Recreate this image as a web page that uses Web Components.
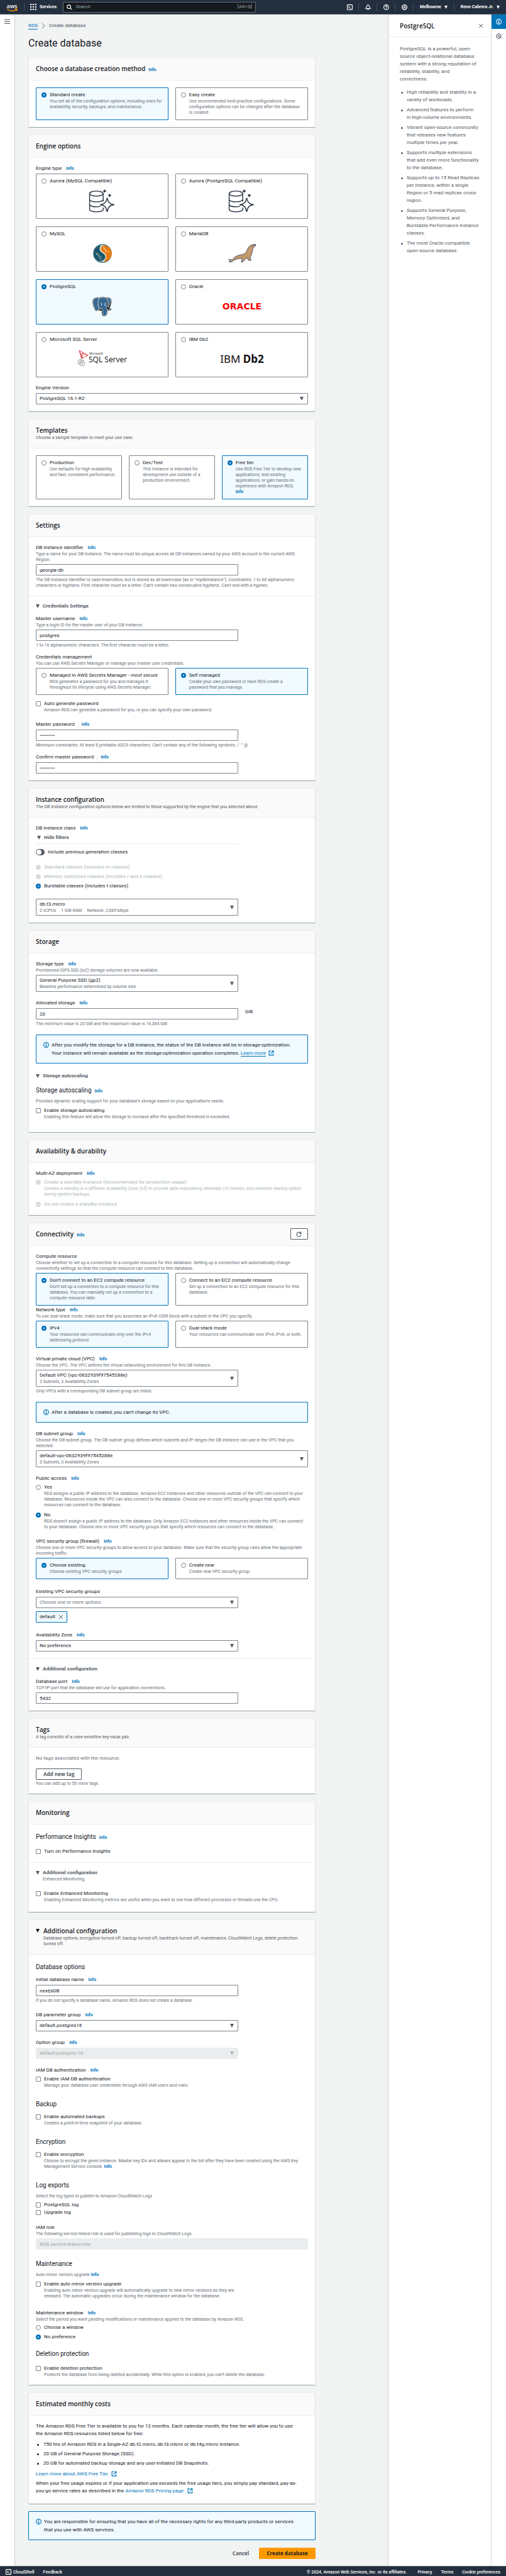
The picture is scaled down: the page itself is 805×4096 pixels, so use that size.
<!DOCTYPE html>
<html lang="en">
<head>
<meta charset="utf-8">
<meta name="viewport" content="width=device-width, initial-scale=1">
<title>Create database - RDS</title>
<style>
  html, body { margin: 0; }
  body {
    --ink: #16191f; --muted: #687078; --soft: #545b64; --link: #0073bb;
    --line: #eaeded; --edge: #7d858c; --off: #aab7b8; --nav: #232f3e;
    --heading: "Open Sans", "Noto Sans", sans-serif;
    font-family: Roboto, "Open Sans", sans-serif;
    font-size: 8px; line-height: 12px; color: var(--ink); background: #f2f3f3;
  }
</style>
</head>
<body>
<console-page>
  <console-topbar slot="top"></console-topbar>
  <crumb-trail></crumb-trail>
  <page-title>Create database</page-title>

  <page-column>
    <form-card heading="Choose a database creation method" info>
      <tile-group>
        <option-tile label="Standard create" name="method" checked>You set all of the configuration options, including ones for availability, security, backups, and maintenance.</option-tile>
        <option-tile label="Easy create" name="method">Use recommended best-practice configurations. Some configuration options can be changed after the database is created.</option-tile>
      </tile-group>
    </form-card>

    <form-card heading="Engine options">
      <v-stack gap="11">
        <form-field label="Engine type" info>
          <tile-group>
            <option-tile label="Aurora (MySQL Compatible)" name="engine"><engine-logo slot="logo" kind="aurora"></engine-logo></option-tile>
            <option-tile label="Aurora (PostgreSQL Compatible)" name="engine"><engine-logo slot="logo" kind="aurora"></engine-logo></option-tile>
            <option-tile label="MySQL" name="engine"><engine-logo slot="logo" kind="mysql"></engine-logo></option-tile>
            <option-tile label="MariaDB" name="engine"><engine-logo slot="logo" kind="mariadb"></engine-logo></option-tile>
            <option-tile label="PostgreSQL" name="engine" checked><engine-logo slot="logo" kind="postgres"></engine-logo></option-tile>
            <option-tile label="Oracle" name="engine"><engine-logo slot="logo" kind="oracle"></engine-logo></option-tile>
            <option-tile label="Microsoft SQL Server" name="engine"><engine-logo slot="logo" kind="sqlserver"></engine-logo></option-tile>
            <option-tile label="IBM Db2" name="engine"><engine-logo slot="logo" kind="db2"></engine-logo></option-tile>
          </tile-group>
        </form-field>
        <form-field label="Engine Version" control="select" value="PostgreSQL 16.1-R2" wide></form-field>
      </v-stack>
    </form-card>

    <form-card heading="Templates" note="Choose a sample template to meet your use case.">
      <tile-group columns="3">
        <option-tile label="Production" name="template">Use defaults for high availability and fast, consistent performance.</option-tile>
        <option-tile label="Dev/Test" name="template">This instance is intended for development use outside of a production environment.</option-tile>
        <option-tile label="Free tier" name="template" checked>Use RDS Free Tier to develop new applications, test existing applications, or gain hands-on experience with Amazon RDS. <info-link></info-link></option-tile>
      </tile-group>
    </form-card>

    <form-card heading="Settings">
      <form-field label="DB instance identifier" info control="text" value="georgia-db"
        note="Type a name for your DB instance. The name must be unique across all DB instances owned by your AWS account in the current AWS Region."
        hint="The DB instance identifier is case-insensitive, but is stored as all lowercase (as in &quot;mydbinstance&quot;). Constraints: 1 to 60 alphanumeric characters or hyphens. First character must be a letter. Can't contain two consecutive hyphens. Can't end with a hyphen."></form-field>
      <v-stack slot="extra" gap="8">
        <expand-head label="Credentials Settings"></expand-head>
        <form-field label="Master username" info control="text" value="postgres" note="Type a login ID for the master user of your DB instance." hint="1 to 16 alphanumeric characters. The first character must be a letter."></form-field>
        <form-field label="Credentials management" note="You can use AWS Secrets Manager or manage your master user credentials.">
          <tile-group>
            <option-tile label="Managed in AWS Secrets Manager - " emphasis="most secure" name="cred">RDS generates a password for you and manages it throughout its lifecycle using AWS Secrets Manager.</option-tile>
            <option-tile label="Self managed" name="cred" checked>Create your own password or have RDS create a password that you manage.</option-tile>
          </tile-group>
        </form-field>
        <v-stack gap="12">
          <choice-row label="Auto generate password">Amazon RDS can generate a password for you, or you can specify your own password.</choice-row>
          <v-stack gap="8">
            <form-field label="Master password" info="divided" control="password" value="postgres1" hint="Minimum constraints: At least 8 printable ASCII characters. Can't contain any of the following symbols: / ' &quot; @"></form-field>
            <form-field label="Confirm master password" info="divided" control="password" value="postgres1"></form-field>
          </v-stack>
        </v-stack>
      </v-stack>
    </form-card>

    <form-card heading="Instance configuration" note="The DB instance configuration options below are limited to those supported by the engine that you selected above.">
      <v-stack gap="12">
        <v-stack gap="4">
          <form-label label="DB instance class" info></form-label>
          <v-stack gap="7">
            <expand-head label="Hide filters" ruled></expand-head>
            <toggle-row label="Include previous generation classes"></toggle-row>
          </v-stack>
        </v-stack>
        <v-stack gap="3">
          <choice-row type="radio" name="class" label="Standard classes (includes m classes)" disabled></choice-row>
          <choice-row type="radio" name="class" label="Memory optimized classes (includes r and x classes)" disabled></choice-row>
          <choice-row type="radio" name="class" label="Burstable classes (includes t classes)" checked></choice-row>
        </v-stack>
        <form-field control="select" aria="DB instance class" value="db.t3.micro" sub="2 vCPUs|1 GiB RAM|Network: 2,085 Mbps"></form-field>
      </v-stack>
    </form-card>

    <form-card heading="Storage">
      <v-stack gap="14">
        <v-stack gap="12">
          <form-field label="Storage type" info control="select" value="General Purpose SSD (gp2)" sub="Baseline performance determined by volume size" note="Provisioned IOPS SSD (io2) storage volumes are now available."></form-field>
          <form-field label="Allocated storage" info control="text" value="20" unit="GiB" hint="The minimum value is 20 GiB and the maximum value is 16,384 GiB"></form-field>
          <info-alert>After you modify the storage for a DB instance, the status of the DB instance will be in storage-optimization.<br>Your instance will remain available as the storage-optimization operation completes. <ext-link underlined>Learn more</ext-link></info-alert>
        </v-stack>
        <v-stack gap="8" tail="8">
          <expand-head label="Storage autoscaling"></expand-head>
          <v-stack gap="4">
            <sub-heading info>Storage autoscaling</sub-heading>
            <small-note>Provides dynamic scaling support for your database's storage based on your application's needs.</small-note>
            <choice-row label="Enable storage autoscaling">Enabling this feature will allow the storage to increase after the specified threshold is exceeded.</choice-row>
          </v-stack>
        </v-stack>
      </v-stack>
    </form-card>

    <form-card heading="Availability &amp; durability">
      <form-field label="Multi-AZ deployment" info>
        <v-stack gap="5">
          <choice-row type="radio" name="az" disabled label="Create a standby instance (recommended for production usage)">Creates a standby in a different Availability Zone (AZ) to provide data redundancy, eliminate I/O freezes, and minimize latency spikes during system backups.</choice-row>
          <choice-row type="radio" name="az" disabled checked label="Do not create a standby instance"></choice-row>
        </v-stack>
      </form-field>
    </form-card>

    <form-card heading="Connectivity" info refresh>
      <v-stack gap="12">
        <v-stack gap="1">
          <form-field label="Compute resource" note="Choose whether to set up a connection to a compute resource for this database. Setting up a connection will automatically change connectivity settings so that the compute resource can connect to this database.">
            <tile-group>
              <option-tile label="Don't connect to an EC2 compute resource" name="ec2" checked>Don't set up a connection to a compute resource for this database. You can manually set up a connection to a compute resource later.</option-tile>
              <option-tile label="Connect to an EC2 compute resource" name="ec2">Set up a connection to an EC2 compute resource for this database.</option-tile>
            </tile-group>
          </form-field>
          <form-field label="Network type" info note="To use dual-stack mode, make sure that you associate an IPv6 CIDR block with a subnet in the VPC you specify.">
            <tile-group>
              <option-tile label="IPv4" name="net" checked>Your resources can communicate only over the IPv4 addressing protocol.</option-tile>
              <option-tile label="Dual-stack mode" name="net">Your resources can communicate over IPv4, IPv6, or both.</option-tile>
            </tile-group>
          </form-field>
        </v-stack>
        <form-field label="Virtual private cloud (VPC)" info control="select" value="Default VPC (vpc-0632939f97545288e)" sub="3 Subnets, 3 Availability Zones" note="Choose the VPC. The VPC defines the virtual networking environment for this DB instance." hint="Only VPCs with a corresponding DB subnet group are listed."></form-field>
        <info-alert>After a database is created, you can't change its VPC.</info-alert>
        <form-field label="DB subnet group" info control="select" wide value="default-vpc-0632939f97545288e" sub="3 Subnets, 3 Availability Zones" note="Choose the DB subnet group. The DB subnet group defines which subnets and IP ranges the DB instance can use in the VPC that you selected."></form-field>
        <form-field label="Public access" info>
          <v-stack gap="5">
            <choice-row type="radio" name="public" label="Yes">RDS assigns a public IP address to the database. Amazon EC2 instances and other resources outside of the VPC can connect to your database. Resources inside the VPC can also connect to the database. Choose one or more VPC security groups that specify which resources can connect to the database.</choice-row>
            <choice-row type="radio" name="public" label="No" checked>RDS doesn't assign a public IP address to the database. Only Amazon EC2 instances and other resources inside the VPC can connect to your database. Choose one or more VPC security groups that specify which resources can connect to the database.</choice-row>
          </v-stack>
        </form-field>
        <v-stack gap="14">
          <form-field label="VPC security group (firewall)" info note="Choose one or more VPC security groups to allow access to your database. Make sure that the security group rules allow the appropriate incoming traffic.">
            <tile-group>
              <option-tile label="Choose existing" name="sg" checked>Choose existing VPC security groups</option-tile>
              <option-tile label="Create new" name="sg">Create new VPC security group</option-tile>
            </tile-group>
          </form-field>
          <v-stack gap="5">
            <form-field label="Existing VPC security groups" control="select" value="Choose one or more options" placeholder></form-field>
            <filter-token>default</filter-token>
          </v-stack>
          <form-field label="Availability Zone" info control="select" value="No preference"></form-field>
        </v-stack>
      </v-stack>
      <v-stack slot="extra" gap="8">
        <expand-head label="Additional configuration"></expand-head>
        <form-field label="Database port" info control="text" value="5432" note="TCP/IP port that the database will use for application connections."></form-field>
      </v-stack>
    </form-card>

    <form-card heading="Tags" note="A tag consists of a case-sensitive key-value pair.">
      <v-stack gap="10">
        <body-text muted>No tags associated with the resource.</body-text>
        <v-stack gap="2">
          <push-button>Add new tag</push-button>
          <small-note>You can add up to 50 more tags.</small-note>
        </v-stack>
      </v-stack>
    </form-card>

    <form-card heading="Monitoring">
      <v-stack gap="8">
        <sub-heading info>Performance Insights</sub-heading>
        <choice-row label="Turn on Performance Insights"></choice-row>
      </v-stack>
      <v-stack slot="extra" gap="12" tail="3">
        <expand-head label="Additional configuration" sub="Enhanced Monitoring"></expand-head>
        <choice-row label="Enable Enhanced Monitoring">Enabling Enhanced Monitoring metrics are useful when you want to see how different processes or threads use the CPU.</choice-row>
      </v-stack>
    </form-card>

    <form-card heading="Additional configuration" expandable note="Database options, encryption turned off, backup turned off, backtrack turned off, maintenance, CloudWatch Logs, delete protection turned off.">
      <v-stack gap="16">
        <v-stack gap="5">
          <sub-heading>Database options</sub-heading>
          <v-stack gap="12">
            <form-field label="Initial database name" info control="text" value="nextjsDB" hint="If you do not specify a database name, Amazon RDS does not create a database."></form-field>
            <form-field label="DB parameter group" info control="select" value="default.postgres16"></form-field>
            <form-field label="Option group" info control="select" value="default:postgres-16" disabled></form-field>
            <form-field label="IAM DB authentication" info>
              <choice-row label="Enable IAM DB authentication">Manage your database user credentials through AWS IAM users and roles.</choice-row>
            </form-field>
          </v-stack>
        </v-stack>
        <v-stack gap="5">
          <sub-heading>Backup</sub-heading>
          <choice-row label="Enable automated backups">Creates a point-in-time snapshot of your database</choice-row>
        </v-stack>
        <v-stack gap="5">
          <sub-heading>Encryption</sub-heading>
          <choice-row label="Enable encryption">Choose to encrypt the given instance. Master key IDs and aliases appear in the list after they have been created using the AWS Key Management Service console. <info-link></info-link></choice-row>
        </v-stack>
        <v-stack gap="14">
          <v-stack gap="12">
            <v-stack gap="4">
              <sub-heading>Log exports</sub-heading>
              <v-stack gap="3">
                <small-note>Select the log types to publish to Amazon CloudWatch Logs</small-note>
                <v-stack gap="0">
                  <choice-row label="PostgreSQL log"></choice-row>
                  <choice-row label="Upgrade log"></choice-row>
                </v-stack>
              </v-stack>
            </v-stack>
            <form-field label="IAM role" control="text" value="RDS service-linked role" disabled wide note="The following service-linked role is used for publishing logs to CloudWatch Logs."></form-field>
          </v-stack>
          <v-stack gap="4">
            <sub-heading>Maintenance</sub-heading>
            <small-note>Auto minor version upgrade <info-link></info-link></small-note>
            <choice-row label="Enable auto minor version upgrade" narrow>Enabling auto minor version upgrade will automatically upgrade to new minor versions as they are released. The automatic upgrades occur during the maintenance window for the database.</choice-row>
          </v-stack>
        </v-stack>
        <v-stack gap="12">
          <form-field label="Maintenance window" info note="Select the period you want pending modifications or maintenance applied to the database by Amazon RDS.">
            <v-stack gap="3">
              <choice-row type="radio" name="window" label="Choose a window"></choice-row>
              <choice-row type="radio" name="window" label="No preference" checked></choice-row>
            </v-stack>
          </form-field>
          <v-stack gap="8">
            <sub-heading>Deletion protection</sub-heading>
            <choice-row label="Enable deletion protection">Protects the database from being deleted accidentally. While this option is enabled, you can’t delete the database.</choice-row>
          </v-stack>
        </v-stack>
      </v-stack>
    </form-card>

    <form-card heading="Estimated monthly costs">
      <cost-summary></cost-summary>
    </form-card>

    <info-alert>You are responsible for ensuring that you have all of the necessary rights for any third-party products or services<br>that you use with AWS services.</info-alert>
    <form-actions></form-actions>
  </page-column>

  <help-panel slot="help"></help-panel>
  <console-footer slot="bottom"></console-footer>
</console-page>

<script>
const BASE = `*, *::before, *::after { box-sizing: border-box; }
  :host { display: block; box-sizing: border-box; }
  a { color: var(--link); text-decoration: none; }
  p, h1, h2, h3, ul { margin: 0; padding: 0; font-weight: 400; }
  svg { display: block; flex: none; overflow: visible; }
  button, input, select { font: inherit; color: inherit; margin: 0; }`;

const CARET = (size = 6) => `<svg class="caret" width="${size}" height="${size}" viewBox="0 0 6 6" aria-hidden="true"><path d="M0 0h6L3 6z" fill="currentColor"/></svg>`;
const STROKE = 'fill="none" stroke="currentColor" stroke-width="2"';
const ICON = {
  shell: `<svg width="9" height="9" viewBox="0 0 16 16" aria-hidden="true"><rect x="1" y="1" width="14" height="14" rx="1" ${STROKE}/><path d="M4.500 5 7.500 8l-3 3M8.500 11.500H12" ${STROKE}/></svg>`,
  bell: `<svg width="9" height="9" viewBox="0 0 16 16" aria-hidden="true"><path d="M1 11.500h14l-3-4V5.500L8 1 4 5.500v2zM6 12v1.500L8 15l2-1.500V12" ${STROKE} stroke-linejoin="round"/></svg>`,
  help: `<svg width="9" height="9" viewBox="0 0 16 16" aria-hidden="true"><circle cx="8" cy="8" r="7" ${STROKE}/><path d="M5.700 6.500C5.700 3.500 10.300 3.700 10.300 6.300 10.300 8 8 8 8 9.800M8 10.800v2" ${STROKE}/></svg>`,
  gear: `<svg width="9" height="9" viewBox="0 0 16 16" aria-hidden="true"><path d="M6.200 1.200h3.600l.7 1.600 1.700-.5 1.800 1.900-.6 1.600 1.500.8v2.800l-1.500.8.6 1.700-1.900 1.800-1.600-.6-.7 1.700H6.200l-.7-1.700-1.600.6L2 11.900l.6-1.700-1.500-.8V6.600l1.500-.8L2 4.200l1.900-1.900 1.600.5z" ${STROKE}/><circle cx="8" cy="8" r="2.200" ${STROKE}/></svg>`,
  info: `<svg width="9" height="9" viewBox="0 0 16 16" aria-hidden="true"><circle cx="8" cy="8" r="7" ${STROKE}/><path d="M8 4v2M6 7.500h2V12M6 12h4.500" ${STROKE}/></svg>`,
  hex: `<svg width="9" height="9" viewBox="0 0 16 16" aria-hidden="true"><path d="M8 1l6 3.500v7L8 15l-6-3.500v-7z" ${STROKE}/><circle cx="7.500" cy="7.500" r="2" fill="currentColor"/><path d="M8 8l5 3" ${STROKE}/></svg>`,
  close: `<svg width="8" height="8" viewBox="0 0 16 16" aria-hidden="true"><path d="M2 2l12 12M14 2 2 14" ${STROKE}/></svg>`,
  ext: `<svg width="9" height="9" viewBox="0 0 16 16" aria-hidden="true"><path d="M7 2H2v12h12V9M9 2h5v5M14 2 6.500 9.500" ${STROKE}/></svg>`,
  refresh: `<svg width="9" height="9" viewBox="0 0 16 16" aria-hidden="true"><path d="M13 4.500A6.300 6.300 0 1 0 14.300 9M14 1v5H9" ${STROKE}/></svg>`,
  search: `<svg width="9" height="9" viewBox="0 0 16 16" aria-hidden="true"><circle cx="6.500" cy="6.500" r="5" ${STROKE}/><path d="M10 10l5 5" ${STROKE}/></svg>`,
  menu: `<svg width="9" height="7" viewBox="0 0 9 7" aria-hidden="true"><path d="M0 .5h9M0 3.500h9M0 6.500h9" stroke="currentColor"/></svg>`,
  apps: `<svg width="10" height="10" viewBox="0 0 9 9" aria-hidden="true"><path d="M0 1h9M0 4.500h9M0 8h9" stroke="currentColor" stroke-width="2" stroke-dasharray="2 1.500"/></svg>`
};

const LOGO = {
  aurora: `<svg width="41" height="37" viewBox="0 0 72 65" fill="none" stroke="#232f3e" stroke-width="2.400">
    <ellipse cx="20" cy="12" rx="19" ry="7"/><path d="M1 12v44c0 4 8 7 19 7s19-3 19-7V51M39 12v22M1 28c0 4 8 7 19 7s19-3 19-7M1 42c0 4 8 7 19 7q8 0 12-2"/>
    <path d="M50 24q3 19 20 19-17 0-20 20-3-20-20-20 17 0 20-19z"/><path d="M43 1v8M39 5h8M57 13v8M53 17h8" stroke-width="3"/></svg>`,
  mysql: `<svg width="30" height="30" viewBox="0 0 52 52"><circle cx="26" cy="26" r="25.500" fill="#1a5666"/><circle cx="26" cy="26" r="23.500" fill="#fff"/>
    <path d="M24 4A22 22 0 0 0 24 48C32 44 36 38 33 31 31 26 22 24 19 17 17 11 20 6 24 4z" fill="#1a5666"/><path d="M30 4A22 22 0 0 1 29 48C38 40 37 33 34 28 31 24 22 21 21 14 21 8 25 4 30 4z" fill="#e97b11"/>
    <path d="M7 24c3 0 4 4 2 6M10 29c4 0 6 4 8 10 2 4 6 5 9 6M12 24c2 7 9 9 12 15M27 8c4 2 7 6 9 10 3 3 7 2 9 5M29 9c0 6 6 9 8 15" fill="none" stroke="#fff" stroke-width="1"/></svg>`,
  mariadb: `<svg width="44" height="30" viewBox="0 0 77 52"><path d="M1 42q7 3 12 0Q20 32 34 30 47 29 52 19 56 5 66 2L76 1q2 2-1 4-3 5-6 6-2 16-8 28l3 6q-2 1-8 0l-3-7-7 5q-2 5-8 8-3-2 0-8l1-4Q24 40 14 46 10 52 2 49q3-1 4-3z" fill="#c49a6c" stroke="#1f305f" stroke-width="1.300"/><path d="M71 1l5 0q1 3-3 3z" fill="#1f305f"/><circle cx="67" cy="6" r="1.200" fill="#1f305f"/></svg>`,
  postgres: `<svg width="31" height="31" viewBox="0 0 54 54"><path d="M7 3Q14 0 20 2 30-1 37 2 46-1 52 6 55 14 47 33q6-1 6 2-4 4-11 3 0 10-4 14-5 3-10 0-2-4-2-14-8 1-10-2Q11 42 7 36-1 20 1 9 3 4 7 3z" fill="#222"/>
    <path d="M8 4Q14 2 19 3 14 8 15 18 14 27 18 30 17 34 15 37 11 39 8 35 1 19 3 10 4 5 8 4zM20 4Q37-2 42 10q1 8-2 17-3 5 1 8 0 12-4 16-4 2-7 0-2-6-2-19-7 1-10-3-2-6-1-12Q16 7 20 4zM39 3q9-1 12 4 1 10-8 23 3-8 2-17Q43 7 39 3z" fill="#336791" stroke="#fff" stroke-width="1"/><path d="M24 16q4 4 1 9M36 16q-4 5 1 11M42 35q4 2 9 0M16 32q5 5 8 2" fill="none" stroke="#fff" stroke-width="1.500"/></svg>`,
  oracle: `<svg width="76" height="18" viewBox="0 0 76 18" role="img"><text x="38" y="14" text-anchor="middle" font-family="DejaVu Sans, sans-serif" font-size="14" font-weight="700" fill="#f80000">ORACLE</text></svg>`,
  sqlserver: `<svg width="82" height="30" viewBox="0 0 82 30" role="img"><path d="M4 1 18 9 8 14zM4 1l4 13M8 6l10 3M6 5l3 8M9 4v9" fill="none" stroke="#e3454d"/><path d="M2 18Q3 15 7 14 11 16 13 22q0 4-2 4-6 0-9-4zM2 21h10M6 15v10M3 18h9M9 16v10M3 24l8-8" fill="none" stroke="#a7abaf"/>
    <text x="20" y="8" font-family="Open Sans, sans-serif" font-size="5" fill="#222">Microsoft</text><text x="19" y="20" font-family="Open Sans, sans-serif" font-size="12" fill="#111">SQL Server</text></svg>`,
  db2: `<svg width="80" height="24" viewBox="0 0 80 24" role="img"><text x="40" y="18" text-anchor="middle" font-family="Noto Sans, sans-serif" font-size="17" fill="#111">IBM <tspan font-weight="700">Db2</tspan></text></svg>`
};

/* Base class: renders `html()` with `css` into an open shadow root. */
class Part extends HTMLElement {
  connectedCallback() {
    if (this.shadowRoot) return;
    const root = this.attachShadow({ mode: 'open' });
    const t = document.createElement('template');
    t.innerHTML = `<style>${BASE}${this.constructor.css || ''}</style>${this.html()}`;
    root.append(t.content.cloneNode(true));
    this.ready?.(root);
  }
  at(name) { return this.getAttribute(name) || ''; }
  on(name) { return this.hasAttribute(name); }
  html() { return '<slot></slot>'; }
}
const esc = s => s.replace(/&/g, '&amp;').replace(/"/g, '&quot;').replace(/</g, '&lt;');
const def = (name, css, html, ready) => customElements.define(name, class extends Part {
  static css = css;
  html() { return html ? html(this) : '<slot></slot>'; }
  ready(root) { ready?.(this, root); }
});

/* Keeps radios of one group exclusive although each sits in its own shadow root. */
const exclusive = (el, root) => {
  const input = root.querySelector('input');
  input.addEventListener('change', () => {
    if (input.type !== 'radio') return;
    for (const other of el.parentElement.children) {
      const box = other.shadowRoot?.querySelector('input');
      if (box && box.type === 'radio' && box !== input) box.checked = false;
    }
  });
};

const CHOICE = `input { appearance: none; width: 8px; height: 8px; flex: none; margin-top: 2px; border: 1px solid var(--edge); background: #fff; border-radius: 1px; }
  input[type=radio] { border-radius: 50%; }
  input[type=radio]:checked { border: 3px solid var(--link); }
  input:disabled { border-color: #d5dbdb; background: #d5dbdb; }
  input[type=radio]:disabled:checked { border-color: #d5dbdb; background: #fff; }
  .note { font-size: 7px; line-height: 9px; color: var(--muted); display: block; }`;

def('info-link', ':host { display: inline; font-size: 7px; font-weight: 700; }', () => '<a href="#info">Info</a>');
def('ext-link', `:host { display: inline; } a { white-space: nowrap; } span { margin-right: 4px; } :host([underlined]) span { border-bottom: 1px solid; } svg { display: inline-block; vertical-align: -2px; }`,
  () => `<a href="#more"><span><slot></slot></span>${ICON.ext}</a>`);
def('small-note', ':host { font-size: 7px; line-height: 9px; color: var(--muted); }');
def('body-text', ':host([muted]) { color: var(--muted); }');
def('sub-heading', 'h3 { font-size: 10px; line-height: 18px; height: 18px; display: flex; align-items: baseline; gap: 5px; }',
  el => `<h3><slot></slot>${el.on('info') ? '<info-link></info-link>' : ''}</h3>`);
def('v-stack', ':host { display: flex; flex-direction: column; }', null, el => {
  el.style.gap = el.at('gap') + 'px';
  if (el.on('tail')) el.style.paddingBottom = el.at('tail') + 'px';
});
def('page-column', ':host { display: flex; flex-direction: column; gap: 11px; width: calc(100% * 5 / 6); }');
def('page-title', 'h1 { font-size: 16px; line-height: 20px; margin: 12px 0; }', () => '<h1><slot></slot></h1>');

def('crumb-trail', `nav { display: flex; align-items: center; gap: 6px; height: 12px; color: var(--muted); font-weight: 500; }
  a { border-bottom: 1px solid; line-height: 10px; font-weight: 400; }`,
  () => `<nav aria-label="Breadcrumb"><a href="#rds">RDS</a><svg width="6" height="8" viewBox="0 0 6 8"><path d="M1 0l4 4-4 4" fill="none" stroke="#687078"/></svg><span>Create database</span></nav>`);

def('form-card', `section { background: #fff; border: 1px solid #dfe4e4; border-top-color: var(--line); border-bottom-color: #98a3a5; }
  header { display: flex; background: #fafafa; border-bottom: 1px solid var(--line); padding: 10px 11px 11px; }
  .text { flex: 1; }
  h2 { font-family: var(--heading); font-size: 10px; line-height: 14px; font-weight: 600; }
  .row { display: flex; align-items: baseline; gap: 5px; height: 14px; line-height: 14px; }
  .note { font-size: 7px; line-height: 9px; color: var(--soft); margin-top: 1px; }
  .lead { width: 12px; padding-top: 4px; }
  .body { padding: 11px; }
  .extra { border-top: 1px solid var(--line); padding: 10px 11px 11px; }
  button { align-self: center; display: grid; place-items: center; width: 28px; height: 18px; margin: -2px 0; padding: 0; background: #fff; border: 1px solid var(--soft); border-radius: 1px; color: var(--soft); }`,
  el => `<section><header>${el.on('expandable') ? `<span class="lead">${CARET(6)}</span>` : ''}
    <div class="text"><div class="row"><h2>${esc(el.at('heading'))}</h2>${el.on('info') ? '<info-link></info-link>' : ''}</div>
    ${el.on('note') ? `<p class="note">${esc(el.at('note'))}</p>` : ''}</div>
    ${el.on('refresh') ? `<button type="button" aria-label="Refresh">${ICON.refresh}</button>` : ''}</header>
    <div class="body"><slot></slot></div>${el.querySelector(':scope > [slot=extra]') ? '<div class="extra"><slot name="extra"></slot></div>' : ''}</section>`);

def('tile-group', `:host { display: grid; grid-template-columns: 1fr 1fr; gap: 12px 11px; } :host([columns="3"]) { grid-template-columns: 1fr 1fr 1fr; }`);
def('option-tile', `${CHOICE}
  label { display: flex; flex-direction: column; height: 100%; padding: 5px 7px 6px 8px; border: 1px solid var(--edge); border-radius: 1px; background: #fff; }
  label:has(:checked) { border-color: var(--link); background: #f1faff; }
  .pick { display: flex; gap: 5px; }
  .text { flex: 1; } .name { display: block; white-space: nowrap; }`,
  el => {
    const logo = el.querySelector('[slot=logo]');
    return `<label><span class="pick"><input type="radio" name="${el.at('name')}"${el.on('checked') ? ' checked' : ''}>
      <span class="text"><span class="name">${esc(el.at('label'))}${el.on('emphasis') ? `<em>${el.at('emphasis')}</em>` : ''}</span>${logo ? '' : '<span class="note"><slot></slot></span>'}</span></span>
      ${logo ? '<slot name="logo"></slot>' : ''}</label>`;
  }, exclusive);
def('engine-logo', ':host { display: grid; place-items: center; height: 47px; padding-top: 3px; }', el => LOGO[el.at('kind')]);

def('choice-row', `${CHOICE}
  label { display: flex; gap: 5px; } .text { flex: 1; } .name { display: block; }
  :host([disabled]) .text, :host([disabled]) .note { color: var(--off); }
  :host([narrow]) { width: calc((100% + 11px) * 3 / 4 - 11px); }`,
  el => `<label><input type="${el.at('type') || 'checkbox'}"${el.on('checked') ? ' checked' : ''}${el.on('disabled') ? ' disabled' : ''}>
    <span class="text"><span class="name">${esc(el.at('label'))}</span>${el.textContent.trim() ? '<span class="note"><slot></slot></span>' : ''}</span></label>`, exclusive);

def('toggle-row', `label { display: flex; gap: 5px; align-items: center; }
  input { appearance: none; width: 14px; height: 10px; border-radius: 5px; padding: 1px; background: var(--soft); display: flex; }
  input::before { content: ""; width: 8px; height: 8px; border-radius: 50%; background: #fff; }
  input:checked { background: var(--link); justify-content: flex-end; }`,
  el => `<label><input type="checkbox" role="switch">${el.at('label')}</label>`);

def('expand-head', `button { display: flex; align-items: center; gap: 5px; height: 12px; padding: 0; border: 0; background: none; color: var(--soft); font-weight: 700; }
  .sub { font-size: 7px; line-height: 9px; color: var(--muted); padding-left: 11px; }
  :host([ruled]) { width: calc((100% + 11px) * 3 / 4 - 11px); padding: 0 2px 3px; border-bottom: 1px solid var(--line); }`,
  el => `<button type="button" aria-expanded="true">${CARET()}${el.at('label')}</button>${el.on('sub') ? `<div class="sub">${el.at('sub')}</div>` : ''}`);

const LABEL = `.label { display: flex; align-items: baseline; gap: 7px; height: 11px; line-height: 11px; }
  .label.divided { gap: 5px; } .divided info-link { border-left: 1px solid var(--line); padding-left: 5px; }`;
const labelRow = (el, inner) => `<div class="label ${el.at('info')}">${inner}${el.on('info') ? '<info-link></info-link>' : ''}</div>`;
def('form-label', LABEL, el => labelRow(el, `<span>${el.at('label')}</span>`));

def('form-field', `${LABEL}
  .label { margin-bottom: 1px; }
  .small { font-size: 7px; line-height: 9px; color: var(--muted); }
  .control { padding-top: 2px; }
  .row { display: flex; gap: 11px; }
  .box { display: grid; align-items: center; width: calc((100% + 11px) * 3 / 4 - 11px); flex: none; }
  :host([wide]) .box { width: 100%; }
  .box > * { grid-area: 1 / 1; }
  input, select { appearance: none; width: 100%; height: 18px; padding: 0 5px; border: 1px solid var(--edge); border-radius: 1px; background: #fff; line-height: 12px; }
  .two select { height: 27px; padding-bottom: 10px; }
  .sub { align-self: end; padding: 0 6px; margin-bottom: 3px; display: flex; gap: 8px; pointer-events: none; }
  .caret { justify-self: end; margin-right: 7px; color: var(--soft); pointer-events: none; }
  :host([placeholder]) select { font-style: italic; color: var(--muted); }
  input:disabled, select:disabled { background: var(--line); border-color: var(--line); color: #95a5a6; opacity: 1; }
  :host([disabled]) .caret { color: var(--off); }
  .hint { margin-top: 3px; }`,
  el => {
    const kind = el.at('control'), value = esc(el.at('value')), off = el.on('disabled') ? ' disabled' : '';
    const aria = el.on('aria') ? ` aria-label="${el.at('aria')}"` : '';
    let control = '<slot></slot>';
    if (kind === 'select') {
      control = `<div class="box${el.on('sub') ? ' two' : ''}"><select id="c"${off}${aria}><option>${value}</option></select>
        ${el.on('sub') ? `<span class="sub small">${el.at('sub').split('|').map(s => `<span>${s}</span>`).join('')}</span>` : ''}${CARET()}</div>`;
    } else if (kind) {
      control = `<div class="row"><div class="box"><input id="c" type="${kind}" value="${value}"${off}></div>${el.on('unit') ? `<span>${el.at('unit')}</span>` : ''}</div>`;
    }
    const label = el.on('label') ? labelRow(el, kind ? `<label for="c">${el.at('label')}</label>` : `<span id="l">${el.at('label')}</span>`) : '';
    return `${label}${el.on('note') ? `<div class="small">${esc(el.at('note'))}</div>` : ''}
      <div class="control"${kind ? '' : ' role="group" aria-labelledby="l"'}>${control}</div>
      ${el.on('hint') ? `<div class="small hint">${esc(el.at('hint'))}</div>` : ''}`;
  });

def('info-alert', `div { display: flex; gap: 4px; padding: 9px 10px 9px 11px; border: 1px solid var(--link); border-radius: 1px; background: #f1faff; line-height: 13px; }
  .icon { color: var(--link); padding-top: 2px; } p { flex: 1; }`,
  () => `<div role="note"><span class="icon">${ICON.info}</span><p><slot></slot></p></div>`);
def('filter-token', `:host { display: flex; } span { display: flex; align-items: center; gap: 5px; height: 18px; padding: 0 5px; border: 1px solid var(--link); border-radius: 1px; background: #f1faff; }
  button { border: 0; padding: 0; background: none; color: var(--soft); }`,
  () => `<span><slot></slot><button type="button" aria-label="Remove default">${ICON.close}</button></span>`);
def('push-button', `:host { display: flex; } button { height: 18px; padding: 0 11px; border: 1px solid var(--soft); border-radius: 1px; background: #fff; color: var(--soft); font-family: var(--heading); font-weight: 700; }
  :host([variant=primary]) button { background: #ff9900; border-color: #ff9900; color: var(--ink); }
  :host([variant=link]) button { background: none; border-color: transparent; }`,
  () => '<button type="button"><slot></slot></button>');
def('form-actions', 'div { display: flex; justify-content: flex-end; gap: 4px; padding-top: 1px; }',
  () => '<div><push-button variant="link">Cancel</push-button><push-button variant="primary">Create database</push-button></div>');

def('cost-summary', `:host { padding-bottom: 3px; }
  ul { list-style: none; margin: 5px 0; display: flex; flex-direction: column; gap: 3px; }
  li { display: flex; align-items: center; gap: 7px; padding-left: 2px; } li::before { content: ""; width: 3px; height: 3px; border-radius: 50%; background: currentColor; }
  .more { margin-bottom: 3px; }`,
  () => `<p>The Amazon RDS Free Tier is available to you for 12 months. Each calendar month, the free tier will allow you to use<br>the Amazon RDS resources listed below for free:</p>
    <ul><li>750 hrs of Amazon RDS in a Single-AZ db.t2.micro, db.t3.micro or db.t4g.micro Instance.</li><li>20 GB of General Purpose Storage (SSD).</li><li>20 GB for automated backup storage and any user-initiated DB Snapshots.</li></ul>
    <p class="more"><ext-link>Learn more about AWS Free Tier.</ext-link></p>
    <p>When your free usage expires or if your application use exceeds the free usage tiers, you simply pay standard, pay-as-<br>you-go service rates as described in the <ext-link>Amazon RDS Pricing page.</ext-link></p>`);

def('help-panel', `:host { color: var(--soft); }
  header { display: flex; align-items: center; justify-content: space-between; height: 36px; padding: 0 12px 0 18px; border-bottom: 1px solid var(--line); }
  h2 { font-family: var(--heading); font-size: 10px; font-weight: 600; color: var(--ink); }
  button { border: 0; padding: 0; background: none; color: var(--soft); }
  .body { padding: 13px 18px; }
  ul { list-style: none; margin-top: 9px; display: flex; flex-direction: column; gap: 4px; }
  li { display: flex; gap: 6px; padding-left: 2px; } li::before { content: ""; flex: none; width: 3px; height: 3px; margin-top: 5px; border-radius: 50%; background: currentColor; }`,
  () => `<header><h2>PostgreSQL</h2><button type="button" aria-label="Close help panel">${ICON.close}</button></header>
    <div class="body"><p>PostgreSQL is a powerful, open-source object-relational database system with a strong reputation of reliability, stability, and<br>correctness.</p>
    <ul><li>High reliability and stability in a variety of workloads.</li><li><span>Advanced features to perform<br>in high-volume environments.</span></li><li>Vibrant open-source community that releases new features multiple times per year.</li><li><span>Supports multiple extensions<br>that add even more functionality to the database.</span></li><li>Supports up to 15 Read Replicas per instance, within a single Region or 5 read replicas cross-region.</li><li>Supports General Purpose, Memory Optimized, and Burstable Performance instance classes.</li><li>The most Oracle-compatible open-source database.</li></ul></div>`);

def('console-topbar', `nav { display: flex; align-items: center; height: 23px; padding: 0 10px; background: var(--nav); color: #fff; font-size: 7px; font-weight: 700; border-bottom: 1px solid #414d5c; }
  button { display: flex; align-items: center; gap: 5px; padding: 0; border: 0; background: none; white-space: nowrap; }
  i { width: 1px; height: 12px; background: #414d5c; flex: none; }
  .services { margin: 0 10px 0 9px; } .aws { margin-right: 9px; }
  .search { display: flex; align-items: center; gap: 5px; flex: 0 1 307px; height: 17px; padding: 0 5px; border: 1px solid #687078; border-radius: 1px; background: #16191f; font-size: 8px; font-weight: 400; }
  .search input { flex: 1; min-width: 0; border: 0; padding: 0; background: none; outline: 0; font-style: italic; } input::placeholder, .search span { color: #95a5a6; opacity: 1; }
  .tools { display: flex; align-items: center; margin-left: auto; }
  .tools button.icon { width: 28px; justify-content: center; } .tools .menu { padding-left: 10px; } .tools .menu:not(:last-child) { padding-right: 10px; }`,
  () => `<nav aria-label="Services">
    <a class="aws" href="#home" aria-label="Home"><svg width="19" height="13" viewBox="0 0 19 13"><text x="9" y="8" text-anchor="middle" font-family="Open Sans, sans-serif" font-size="9" font-weight="600" fill="#fff">aws</text><path d="M1 9.500q8 5 15 1M14 9.500h3l-1 3" fill="none" stroke="#f90" stroke-width="1.300"/></svg></a><i></i>
    <button type="button" class="services">${ICON.apps}Services</button>
    <label class="search">${ICON.search}<input type="search" placeholder="Search" aria-label="Search"><span>[Alt+S]</span></label>
    <div class="tools">${['shell', 'bell', 'help', 'gear'].map(n => `<button type="button" class="icon" aria-label="${n}">${ICON[n]}</button><i></i>`).join('')}
      <button type="button" class="menu">Melbourne ${CARET(5)}</button><i></i><button type="button" class="menu">Rene Cabrera Jr. ${CARET(5)}</button></div></nav>`);

def('console-footer', `footer { display: flex; align-items: center; gap: 14px; height: 18px; padding: 0 9px; background: var(--nav); color: #fff; font-size: 7px; font-weight: 500; border-top: 1px solid #545b64; }
  a { color: inherit; display: flex; align-items: center; gap: 3px; } .copy { margin-left: auto; margin-right: 3px; }`,
  () => `<footer><a href="#shell">${ICON.shell}CloudShell</a><a href="#feedback">Feedback</a><span class="copy">© 2024, Amazon Web Services, Inc. or its affiliates.</span><a href="#privacy">Privacy</a><a href="#terms">Terms</a><a href="#cookies">Cookie preferences</a></footer>`);

def('console-page', `:host { display: flex; flex-direction: column; min-height: 100vh; }
  .middle { flex: 1; display: grid; grid-template-columns: 24px minmax(0, 1fr) 165px 23px; }
  .rail, aside { background: #fff; } .rail { border-right: 1px solid #c9cfd0; padding-top: 8px; }
  .rail button, .tools button { display: grid; place-items: center; width: 23px; border: 0; padding: 0; background: none; color: var(--soft); }
  main { padding: 12px 24px 11px 21px; }
  aside { border-left: 1px solid #c9cfd0; border-right: 1px solid #d5dbdb; }
  .tools { background: #fff; } .tools button { height: 23px; } .tools button.active { background: var(--link); color: #fff; }`,
  () => `<slot name="top"></slot><div class="middle"><div class="rail"><button type="button" aria-label="Open navigation">${ICON.menu}</button></div>
    <main><slot></slot></main><aside><slot name="help"></slot></aside>
    <div class="tools"><button type="button" class="active" aria-label="Info">${ICON.info}</button><button type="button" aria-label="Diagnostics">${ICON.hex}</button></div></div><slot name="bottom"></slot>`);
</script>
</body>
</html>
